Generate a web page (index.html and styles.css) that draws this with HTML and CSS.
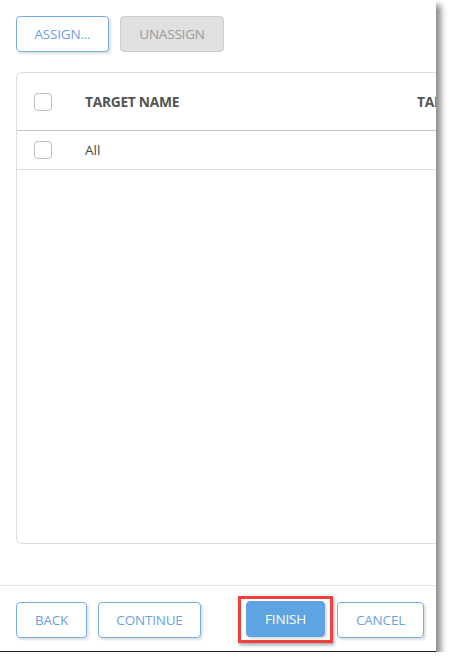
FILE: index.html
```html
<!DOCTYPE html>
<html>
<head>
	<title>Assign targets</title>
	<meta http-equiv="content-type" content="text/html; charset=UTF-8">
	<link rel="stylesheet" href="styles.css">
</head>
<body>
	<div id="panel">
		<div id="toolbar">
			<button class="btn">ASSIGN...</button>
			<button class="btn disabled">UNASSIGN</button>
		</div>
		<div id="grid">
			<div class="grid-head">
				<span class="check"></span>
				<span class="col name">TARGET NAME</span>
				<span class="col">TARGET TYPE</span>
			</div>
			<div class="grid-row">
				<span class="check"></span>
				<span class="col name">All</span>
			</div>
		</div>
		<div id="footer">
			<button class="btn back">BACK</button>
			<button class="btn continue">CONTINUE</button>
			<span class="highlight"><button class="btn primary">FINISH</button></span>
			<button class="btn cancel">CANCEL</button>
		</div>
	</div>
</body>
</html>
```

FILE: styles.css
```css
*{
	box-sizing: border-box;
	font-family: 'Open Sans', 'Noto Sans', sans-serif;
}

body{
	margin: 0;
	background: #fff;
}

#panel{
	width: 436px;
	height: 652px;
	display: flex;
	flex-direction: column;
	overflow: hidden;
	background: #fff;
	border-bottom: 1px solid #1e1e1e;
	box-shadow: 5px 5px 6px rgba(0,0,0,0.45);
}

.btn{
	flex: none;
	height: 36px;
	padding: 0;
	background: #fff;
	border: 1px solid #75aee6;
	border-radius: 4px;
	color: #6c9fe0;
	font-size: 13.5px;
	letter-spacing: -0.2px;
	box-shadow: 2px 2px 2px rgba(0,0,0,0.12);
	cursor: pointer;
}

.btn.disabled{
	background: #e0e0e0;
	border-color: #cccccc;
	color: #9a9a9a;
	box-shadow: none;
}

.btn.primary{
	background: #5ea3e2;
	border-color: #5ea3e2;
	color: #fff;
	width: 79px;
	margin: 0 3px;
}

#toolbar{
	display: flex;
	gap: 11px;
	padding: 16px 0 0 16px;
}

#toolbar .btn{
	width: 93px;
}

#toolbar .btn.disabled{
	width: 104px;
}

#grid{
	flex: none;
	width: 520px;
	height: 472px;
	margin: 20px 0 0 16px;
	border: 1px solid #dddddd;
	border-radius: 6px;
}

.grid-head,
.grid-row{
	display: flex;
	align-items: center;
	padding-left: 17px;
}

.grid-head{
	height: 58px;
	border-bottom: 1px solid #bac8d2;
}

.grid-row{
	height: 39px;
	border-bottom: 1px solid #dedede;
}

.check{
	flex: none;
	width: 18px;
	height: 18px;
	border: 1px solid #bdbdbd;
	border-radius: 4px;
	margin-right: 33px;
}

.col{
	font-size: 13.5px;
	color: #444;
	white-space: nowrap;
}

.col.name{
	width: 332px;
}

.grid-head .col{
	font-size: 13.8px;
	font-weight: bold;
	color: #555;
	letter-spacing: -0.3px;
}

#footer{
	display: flex;
	align-items: center;
	margin-top: 41px;
	padding: 10px 0 0 16px;
	border-top: 1px solid #e3e3e3;
}

#footer .back{
	width: 71px;
}

#footer .continue{
	width: 103px;
	margin-left: 11px;
}

#footer .cancel{
	width: 87px;
	margin-left: 4px;
}

.highlight{
	display: inline-flex;
	flex: none;
	margin-left: 37px;
	padding: 2px 2px 3px 2px;
	border: 3px solid #f2403f;
	box-shadow: 1px 2px 3px rgba(0,0,0,0.35);
}
```
